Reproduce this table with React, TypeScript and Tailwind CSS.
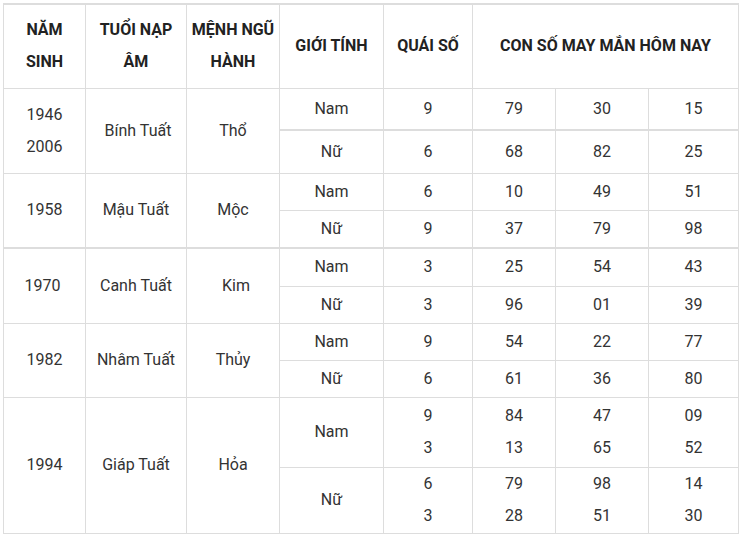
import React from "react";

type Sub = { gender: string; quai: string[]; nums: string[][]; h: number; thick?: boolean };
type Group = {
  years: string[];
  napAm: string;
  menh: string;
  rows: Sub[];
  thickTop?: boolean;
  shift?: [string, string, string];
};

const groups: Group[] = [
  {
    years: ["1946", "2006"],
    napAm: "Bính Tuất",
    menh: "Thổ",
    shift: ["", "pl-[4px]", ""],
    rows: [
      { gender: "Nam", quai: ["9"], nums: [["79", "30", "15"]], h: 42 },
      { gender: "Nữ", quai: ["6"], nums: [["68", "82", "25"]], h: 43, thick: true },
    ],
  },
  {
    years: ["1958"],
    napAm: "Mậu Tuất",
    menh: "Mộc",
    rows: [
      { gender: "Nam", quai: ["6"], nums: [["10", "49", "51"]], h: 37 },
      { gender: "Nữ", quai: ["9"], nums: [["37", "79", "98"]], h: 38 },
    ],
  },
  {
    years: ["1970"],
    napAm: "Canh Tuất",
    menh: "Kim",
    thickTop: true,
    shift: ["pr-[4px]", "", "pl-[6px]"],
    rows: [
      { gender: "Nam", quai: ["3"], nums: [["25", "54", "43"]], h: 38 },
      { gender: "Nữ", quai: ["3"], nums: [["96", "01", "39"]], h: 37 },
    ],
  },
  {
    years: ["1982"],
    napAm: "Nhâm Tuất",
    menh: "Thủy",
    rows: [
      { gender: "Nam", quai: ["9"], nums: [["54", "22", "77"]], h: 37 },
      { gender: "Nữ", quai: ["6"], nums: [["61", "36", "80"]], h: 37 },
    ],
  },
  {
    years: ["1994"],
    napAm: "Giáp Tuất",
    menh: "Hỏa",
    rows: [
      { gender: "Nam", quai: ["9", "3"], nums: [["84", "47", "09"], ["13", "65", "52"]], h: 70 },
      { gender: "Nữ", quai: ["6", "3"], nums: [["79", "98", "14"], ["28", "51", "30"]], h: 66 },
    ],
  },
];

function Lines({ items }: { items: string[] }) {
  return (
    <>
      {items.map((t, i) => (
        <div key={i}>{t}</div>
      ))}
    </>
  );
}

export default function App() {
  const cell = "border border-[#dddddd] text-center align-middle p-0";
  return (
    <div className="bg-white w-[743px] h-[541px] pt-[3px] pl-[3px]">
      <table
        className="table-fixed border-collapse w-[735px] text-[16px] leading-[32px] text-[#333333]"
        style={{ fontFamily: "Roboto, 'Noto Sans', sans-serif" }}
      >
        <colgroup>
          <col className="w-[82px]" />
          <col className="w-[101px]" />
          <col className="w-[93px]" />
          <col className="w-[104px]" />
          <col className="w-[89px]" />
          <col className="w-[83px]" />
          <col className="w-[93px]" />
          <col className="w-[90px]" />
        </colgroup>
        <thead>
          <tr className="h-[84px] font-bold text-[#222222]">
            <th className={`${cell} border-t-2`}>
              NĂM
              <br />
              SINH
            </th>
            <th className={`${cell} border-t-2`}>
              TUỔI NẠP
              <br />
              ÂM
            </th>
            <th className={`${cell} border-t-2`}>
              MỆNH NGŨ
              <br />
              HÀNH
            </th>
            <th className={`${cell} border-t-2`}>GIỚI TÍNH</th>
            <th className={`${cell} border-t-2`}>QUÁI SỐ</th>
            <th className={`${cell} border-t-2`} colSpan={3}>
              CON SỐ MAY MẮN HÔM NAY
            </th>
          </tr>
        </thead>
        <tbody>
          {groups.map((g) =>
            g.rows.map((r, ri) => {
              const top = (ri === 0 && g.thickTop) || r.thick ? "border-t-2" : "";
              const s = g.shift ?? ["", "", ""];
              return (
                <tr key={g.years[0] + r.gender} style={{ height: r.h }}>
                  {ri === 0 && (
                    <>
                      <td className={`${cell} ${top} ${s[0]}`} rowSpan={g.rows.length}>
                        <Lines items={g.years} />
                      </td>
                      <td className={`${cell} ${top} ${s[1]}`} rowSpan={g.rows.length}>
                        {g.napAm}
                      </td>
                      <td className={`${cell} ${top} ${s[2]}`} rowSpan={g.rows.length}>
                        {g.menh}
                      </td>
                    </>
                  )}
                  <td className={`${cell} ${top}`}>{r.gender}</td>
                  <td className={`${cell} ${top}`}>
                    <Lines items={r.quai} />
                  </td>
                  {[0, 1, 2].map((c) => (
                    <td key={c} className={`${cell} ${top}`}>
                      <Lines items={r.nums.map((n) => n[c])} />
                    </td>
                  ))}
                </tr>
              );
            })
          )}
        </tbody>
      </table>
    </div>
  );
}
